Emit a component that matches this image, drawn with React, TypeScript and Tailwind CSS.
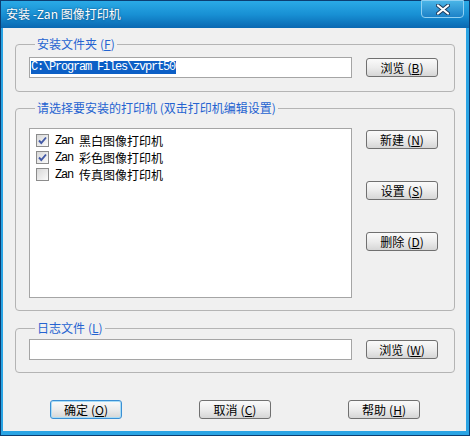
import React from 'react'

const cjk = "font-['Noto_Sans_CJK_SC',sans-serif]"

function Key({ k }: { k: string }) {
  // mnemonic such as (F) with the letter underlined
  return (
    <span className="ml-[3px]">
      (<span className="underline">{k}</span>)
    </span>
  )
}

function Btn({ label, k, isDefault }: { label: string; k: string; isDefault?: boolean }) {
  return (
    <button
      className={`w-[72px] h-[19px] rounded-[3px] border flex items-center justify-center text-[12px] leading-none text-black bg-gradient-to-b from-[#fafafa] via-[#ececec] to-[#d6d6d6] ${
        isDefault ? 'border-[#3a8fd4] shadow-[inset_0_0_0_1px_#a8dcf6]' : 'border-[#707070]'
      }`}
    >
      {label}
      <Key k={k} />
    </button>
  )
}

function CheckBox({ checked }: { checked: boolean }) {
  return (
    <span className="w-[13px] h-[13px] border border-[#8c8c8c] bg-gradient-to-br from-[#d8d8d8] to-[#fbfbfb] flex items-center justify-center shrink-0">
      {checked && (
        <svg width="11" height="11" viewBox="0 0 11 11">
          <polyline points="2,5.5 4.3,8 9,2.5" fill="none" stroke="#4259a6" strokeWidth="1.9" />
        </svg>
      )}
    </span>
  )
}

function Group({ title, className, children }: { title: React.ReactNode; className: string; children: React.ReactNode }) {
  return (
    <fieldset className={`w-[440px] ml-[12px] border border-[#b4b4b4] rounded-[4px] pl-[13px] ${className}`}>
      <legend className="ml-[6px] px-[2px] text-[12px] leading-[12px] text-[#2563d0]">{title}</legend>
      {children}
    </fieldset>
  )
}

const printers = [
  { name: '黑白图像打印机', checked: true },
  { name: '彩色图像打印机', checked: true },
  { name: '传真图像打印机', checked: false },
]

export default function App() {
  return (
    <div className={`w-[470px] h-[436px] flex flex-col border border-[#0c3e72] bg-[#f0f0f0] ${cjk}`}>
      {/* title bar */}
      <div className="h-[27px] flex items-start justify-between bg-gradient-to-b from-[#2aaae6] via-[#1890d4] to-[#0a68b2] pl-[5px] pr-[5px]">
        <span className="mt-[6px] text-[12px] leading-[14px] text-white [text-shadow:0_0_2px_#0a3d6a]">
          安装 -Zan 图像打印机
        </span>
        <div className="w-[43px] h-[18px] -mt-[1px] rounded-b-[4px] border border-[#8fd0f2] bg-gradient-to-b from-[#49b4e6] to-[#1c82c8] flex items-center justify-center">
          <svg width="14" height="11" viewBox="0 0 14 11">
            <path d="M2 1.5 L12 9.5 M12 1.5 L2 9.5" stroke="#1d3b5c" strokeWidth="4" strokeLinecap="round" />
            <path d="M2 1.5 L12 9.5 M12 1.5 L2 9.5" stroke="#ffffff" strokeWidth="2.2" strokeLinecap="round" />
          </svg>
        </div>
      </div>

      {/* client area */}
      <div className="flex-1 flex flex-col border-l-2 border-r-[3px] border-b-4 border-[#2aa4e4]">
        <Group
          className="mt-[10px] h-[54px] pt-[7px]"
          title={<>安装文件夹<Key k="F" /></>}
        >
          <div className="flex items-start">
            <div className="w-[323px] h-[21px] border border-[#a5a5a5] bg-white flex items-center pl-[1px]">
              <span className="bg-[#0c5fc6] text-white text-[12px] leading-[13px] font-['Liberation_Mono',monospace] tracking-[-1.2px] pr-[1px]">
                C:\Program Files\zvprt50
              </span>
            </div>
            <div className="ml-[14px] mt-[1px]">
              <Btn label="浏览" k="B" />
            </div>
          </div>
        </Group>

        <Group
          className="mt-[10px] h-[209px] pt-[14px]"
          title={<>请选择要安装的打印机 (双击打印机编辑设置)</>}
        >
          <div className="flex items-start">
            <div className="w-[323px] h-[170px] border border-[#a5a5a5] bg-white pt-[3px] pl-[6px]">
              {printers.map((p) => (
                <div key={p.name} className="h-[17px] flex items-center text-[12px] leading-none text-black">
                  <CheckBox checked={p.checked} />
                  <span className="ml-[6px] font-['Liberation_Mono',monospace] tracking-[-1.2px]">Zan</span>
                  <span className="ml-[6px]">{p.name}</span>
                </div>
              ))}
            </div>
            <div className="ml-[14px] mt-[2px] flex flex-col gap-[32px]">
              <Btn label="新建" k="N" />
              <Btn label="设置" k="S" />
              <Btn label="删除" k="D" />
            </div>
          </div>
        </Group>

        <Group
          className="mt-[11px] h-[51px] pt-[5px]"
          title={<>日志文件<Key k="L" /></>}
        >
          <div className="flex items-start">
            <div className="w-[323px] h-[21px] border border-[#a5a5a5] bg-white" />
            <div className="ml-[14px] mt-[1px]">
              <Btn label="浏览" k="W" />
            </div>
          </div>
        </Group>

        <div className="mt-[27px] ml-[47px] flex gap-[77px]">
          <Btn label="确定" k="O" isDefault />
          <Btn label="取消" k="C" />
          <Btn label="帮助" k="H" />
        </div>
      </div>
    </div>
  )
}
